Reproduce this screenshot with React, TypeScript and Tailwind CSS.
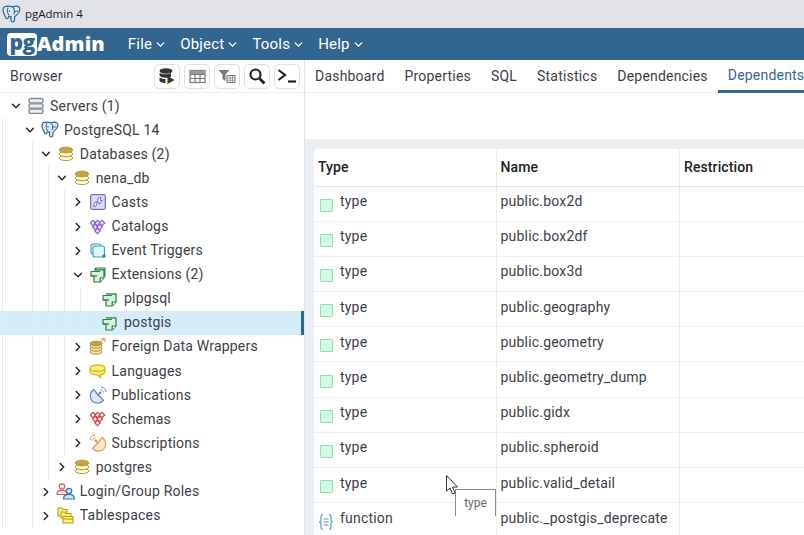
import { ChevronDown, ChevronRight } from "lucide-react";
import type { ReactNode } from "react";

const font = { fontFamily: "Roboto, sans-serif" };

const Elephant = ({ size = 18 }: { size?: number }) => (
  <svg width={size} height={size} viewBox="0 0 20 20" fill="none" stroke="#336791" strokeWidth="1.300" strokeLinejoin="round" className="shrink-0">
    <path d="M4 1.500C1.500 1.500.8 4 1.200 6.500 1.600 9 3 11 3.800 13c.5 1.500 1.700 2 2.700.5L7 12c1 .5 2 .5 2.500 0V16c.2 2 3 2.500 3.500.5l.3-4c1.700-1.500 5.200-4.500 5.500-7.500.2-2.500-1.800-4-4.300-3.800-1.500.1-2.500.6-3.500.8C9 1.200 6 1 4 1.500z" fill="#dceaf4" />
    <path d="M6.500 2.500C5 5 5.500 8 7.300 11M11 2c1.800 1.500 2.500 5 1.500 8M13 6.500c1.500.5 3 .3 4-.5" strokeWidth="1.100" />
    <circle cx="7.800" cy="6.300" r=".8" fill="#336791" stroke="none" />
  </svg>
);

const Servers = () => (
  <svg width="18" height="18" viewBox="0 0 18 18" fill="#eceef2" stroke="#858a94" strokeWidth="1.300">
    <rect x="2" y="1.500" width="14" height="4.300" rx="1.300" />
    <rect x="2" y="6.800" width="14" height="4.300" rx="1.300" />
    <rect x="2" y="12.100" width="14" height="4.300" rx="1.300" />
  </svg>
);

const Db = () => (
  <svg width="16" height="16" viewBox="0 0 16 16" stroke="#b39a3a" strokeWidth="1">
    <ellipse cx="8" cy="12" rx="6.800" ry="2.600" fill="#fff8d0" />
    <ellipse cx="8" cy="8" rx="6.800" ry="2.600" fill="#fff8d0" />
    <ellipse cx="8" cy="4" rx="6.800" ry="2.800" fill="#c2a63e" />
  </svg>
);

const Casts = () => (
  <svg width="16" height="16" viewBox="0 0 16 16" fill="none">
    <rect x=".7" y=".7" width="14.600" height="14.600" rx="1.500" fill="#dcdcf8" stroke="#6f6fc8" strokeWidth="1.200" />
    <path d="M11 3.500H8.500L7 8h2.500l-.5 2.500 3.500-4H10l1-3zM3.500 12.500l1.500-4.500h2l-1 4.500z" fill="#fff" stroke="#6f6fc8" strokeWidth=".9" />
  </svg>
);

const Diamonds = ({ c, fill }: { c: string; fill: string }) => (
  <svg width="17" height="16" viewBox="0 0 17 16" fill={fill} stroke={c} strokeWidth="1.100">
    {[[4, 4], [8.500, 4], [13, 4], [6.200, 8], [10.700, 8], [8.500, 12]].map(([x, y]) => (
      <path key={`${x}-${y}`} d={`M${x} ${y - 2.800}L${x + 2.800} ${y}L${x} ${y + 2.800}L${x - 2.800} ${y}z`} />
    ))}
  </svg>
);

const EventTrigger = () => (
  <svg width="16" height="16" viewBox="0 0 16 16" fill="#e0f6fa" stroke="#37a3b8" strokeWidth="1.100">
    <rect x="1" y="1" width="10" height="10" rx="2" />
    <rect x="3" y="3" width="11.500" height="11" rx="2" />
    <path d="M12.500 11.500h3v3h-3z" fill="#1f8ea3" stroke="none" />
  </svg>
);

// page with a tab on the left and a folded lower corner
const Extension = ({ stacked }: { stacked?: boolean }) => (
  <svg width="16" height="16" viewBox="0 0 16 16" fill="#d7f0d9" stroke="#2e7d46" strokeWidth="1.200" strokeLinejoin="round">
    {stacked && <path d="M5.500 3V1H15v8h-1" />}
    <path d="M4 2.800h10v8.200l-3.800 4H4V9H1V4.500h9" />
    <path d="M14 11h-3.800v4" fill="#fff" />
    <path d="M1 9h6" fill="none" />
  </svg>
);

const Fdw = () => (
  <svg width="17" height="17" viewBox="0 0 17 17" fill="#f3e6a0" stroke="#a88f34" strokeWidth="1">
    <ellipse cx="7" cy="14" rx="6" ry="2.200" />
    <ellipse cx="7" cy="11" rx="6" ry="2.200" />
    <ellipse cx="7" cy="8" rx="6" ry="2.200" />
    <ellipse cx="7" cy="5.500" rx="6" ry="2.200" fill="#c2a63e" />
    <path d="M11 4l4-3M12.500 .8H16v3" fill="none" stroke="#c98a2e" />
  </svg>
);

const Languages = () => (
  <svg width="17" height="15" viewBox="0 0 17 15" fill="#fdf27a" stroke="#d9b81f" strokeWidth="1.300" strokeLinejoin="round">
    <path d="M1 4.500C1 2.500 4 1 8.500 1S16 2.500 16 4.500v3c0 2-2.500 3-5 3.200L12 14 8 10.800C4 10.800 1 9.500 1 7.500z" />
    <path d="M1 4.500c1 2 4 3 7.500 3S15 6.500 16 4.500" fill="none" />
  </svg>
);

// bowl sits lower-left, signal arcs go to the upper right; flip mirrors it
const Dish = ({ c, fill, spark, flip }: { c: string; fill: string; spark: string; flip?: boolean }) => (
  <svg width="18" height="18" viewBox="0 0 18 18" fill={fill} stroke={c} strokeWidth="1.200" strokeLinejoin="round">
    <g transform={flip ? "translate(18 0) scale(-1 1)" : undefined}>
      <path d="M4.500 3.500C.5 7 .5 12 3 14.800s8 3.500 11.500 -.3z" />
      <path d="M8.500 9.500L11 7" fill="none" />
      <circle cx="11.300" cy="6.700" r="1.200" fill={spark} stroke="none" />
      <path d="M11.500 3.500c1.500.2 2.800 1.500 3 3M12 1c2.800.2 4.800 2.200 5 5" fill="none" stroke={spark} strokeWidth="1" />
    </g>
  </svg>
);

const Roles = () => (
  <svg width="20" height="17" viewBox="0 0 20 17" strokeWidth="1.200">
    <g fill="#fde8e8" stroke="#cf5a5f">
      <circle cx="6" cy="3.500" r="2.700" />
      <path d="M1 11.500C1 8.500 3 7.200 6 7.200s4 .8 5 2.300v2H1z" />
    </g>
    <g fill="#cfe3f7" stroke="#3678b8">
      <circle cx="13" cy="8" r="2.700" />
      <path d="M7.500 16c0-3 2-4.600 5.500-4.600s5.500 1.600 5.500 4.600z" />
    </g>
  </svg>
);

const Tablespaces = () => (
  <svg width="17" height="17" viewBox="0 0 17 17" fill="#fdf27a" stroke="#b89b17" strokeWidth="1.100" strokeLinejoin="round">
    <path d="M1 1h4l1 1.500h4V9H1z" />
    <path d="M4 5h4l1 1.500h5V11H4z" />
    <rect x="6" y="9.500" width="10" height="6.500" />
    <path d="M6 12h10" />
  </svg>
);

const TypeIcon = () => (
  <span className="block h-[13px] w-[13px] shrink-0 rounded-[1px] border border-[#8fe0b4] bg-[#d3f9e3]" />
);

const FnIcon = () => (
  <svg width="16" height="18" viewBox="0 0 16 18" fill="none" stroke="#3d9fb5" strokeWidth="1.100" className="shrink-0">
    <path d="M5 1.500C3 1.500 3 2.500 3 4v3.500C3 8.500 2 9 1 9c1 0 2 .5 2 1.500V14c0 1.500 0 2.500 2 2.500M11 1.500c2 0 2 1 2 2.500v3.500c0 1 1 1.500 2 1.500-1 0-2 .5-2 1.500V14c0 1.500 0 2.500-2 2.500" />
    <path d="M5.500 6h5M5.500 9h5M5.500 12h5" stroke="#6b8ea0" />
  </svg>
);

type Node = { label: string; icon: ReactNode; open?: boolean; leaf?: boolean; selected?: boolean; children?: Node[] };

const tree: Node = {
  label: "Servers (1)",
  icon: <Servers />,
  open: true,
  children: [
    {
      label: "PostgreSQL 14",
      icon: <Elephant />,
      open: true,
      children: [
        {
          label: "Databases (2)",
          icon: <Db />,
          open: true,
          children: [
            {
              label: "nena_db",
              icon: <Db />,
              open: true,
              children: [
                { label: "Casts", icon: <Casts /> },
                { label: "Catalogs", icon: <Diamonds c="#8a5fc7" fill="#e4d6f7" /> },
                { label: "Event Triggers", icon: <EventTrigger /> },
                {
                  label: "Extensions (2)",
                  icon: <Extension stacked />,
                  open: true,
                  children: [
                    { label: "plpgsql", icon: <Extension />, leaf: true },
                    { label: "postgis", icon: <Extension />, leaf: true, selected: true },
                  ],
                },
                { label: "Foreign Data Wrappers", icon: <Fdw /> },
                { label: "Languages", icon: <Languages /> },
                { label: "Publications", icon: <Dish c="#6a7fc4" fill="#dfe6fa" spark="#6a7fc4" /> },
                { label: "Schemas", icon: <Diamonds c="#c9444f" fill="#fbdcdc" /> },
                { label: "Subscriptions", icon: <Dish c="#e39a4b" fill="#fde7cd" spark="#e08a2e" flip /> },
              ],
            },
            { label: "postgres", icon: <Db /> },
          ],
        },
        { label: "Login/Group Roles", icon: <Roles /> },
        { label: "Tablespaces", icon: <Tablespaces /> },
      ],
    },
  ],
};

// each level goes in by about 16px, the first one sits 2px further right
const TreeNode = ({ node, depth }: { node: Node; depth: number }) => (
  <div className="relative">
    <div
      className={`flex h-[24.1px] items-center ${node.selected ? "border-r-[3px] border-[#326690] bg-[#d5ecfa]" : ""}`}
      style={{ paddingLeft: (depth === 0 ? 9 : 7) + depth * 15.9 }}
    >
      <span className="flex w-[14px] shrink-0 justify-center text-[#222]">
        {node.leaf ? null : node.open ? (
          <ChevronDown size={14} strokeWidth={2.4} />
        ) : (
          <ChevronRight size={14} strokeWidth={2.4} />
        )}
      </span>
      <span className={`flex w-[20px] shrink-0 justify-center ${node.leaf ? "-ml-[0.5px]" : "ml-[3px]"}`}>{node.icon}</span>
      <span className="ml-[4px] whitespace-nowrap text-[14px] tracking-[0.2px] text-[#3c4149]">{node.label}</span>
    </div>
    {node.children && (
      <div className="relative">
        <span
          className="absolute bottom-0 top-0 z-10 w-px bg-[#e4e8f0]"
          style={{ left: depth === 0 ? 2 : 16.500 + depth * 15.9 }}
        />
        {node.children.map((c) => (
          <TreeNode key={c.label} node={c} depth={depth + 1} />
        ))}
      </div>
    )}
  </div>
);

const ToolButton = ({ children }: { children: ReactNode }) => (
  <button className="flex h-[25px] w-[26px] items-center justify-center rounded-[5px] border border-[#dde0e6] bg-white">
    {children}
  </button>
);

const rows: [string, string][] = [
  ["type", "public.box2d"],
  ["type", "public.box2df"],
  ["type", "public.box3d"],
  ["type", "public.geography"],
  ["type", "public.geometry"],
  ["type", "public.geometry_dump"],
  ["type", "public.gidx"],
  ["type", "public.spheroid"],
  ["type", "public.valid_detail"],
  ["function", "public._postgis_deprecate"],
];

const menus = ["File", "Object", "Tools", "Help"];
const tabs = ["Dashboard", "Properties", "SQL", "Statistics", "Dependencies", "Dependents"];

export default function App() {
  return (
    <div className="relative flex h-[535px] w-[804px] flex-col overflow-hidden bg-white" style={font}>
      {/* window title */}
      <div className="flex h-[28px] shrink-0 items-center bg-[#e1e3e6] pl-[2px]">
        <Elephant size={19} />
        <span className="ml-[4px] text-[11.500px] text-[#1b1b1b]" style={{ fontFamily: "'Open Sans', sans-serif" }}>
          pgAdmin 4
        </span>
      </div>

      {/* navbar */}
      <div className="flex h-[32px] shrink-0 items-center bg-[#326690] pl-[7px]">
        <div className="flex items-center" style={{ fontFamily: "'Open Sans', sans-serif" }}>
          <span className="flex h-[23px] w-[30px] items-center justify-center rounded-[4px] bg-white pb-[3px] text-[21px] font-extrabold leading-none tracking-[-0.5px] text-[#326690]">
            pg
          </span>
          <span className="text-[20px] font-extrabold leading-none tracking-[0.1px] text-white">Admin</span>
        </div>
        <div className="ml-[23px] flex gap-[13px]">
          {menus.map((m) => (
            <span key={m} className="flex items-center text-[15px] tracking-[0.2px] text-white">
              {m}
              <ChevronDown size={13} strokeWidth={2.4} className="ml-[2px]" />
            </span>
          ))}
        </div>
      </div>

      <div className="flex min-h-0 flex-1">
        {/* browser */}
        <div className="flex w-[305px] shrink-0 flex-col border-r border-[#dfe3ea]">
          <div className="flex h-[33px] shrink-0 items-center justify-between border-b border-[#eef0f4] pl-[10px] pr-[4px]">
            <span className="text-[14px] tracking-[0.2px] text-[#3c4149]">Browser</span>
            <div className="flex gap-[4px]">
              <ToolButton>
                <svg width="18" height="18" viewBox="0 0 18 18">
                  <ellipse cx="8" cy="4" rx="6.500" ry="2.700" fill="#333" />
                  <path d="M1.500 6v2c0 1.500 3 2.700 6.500 2.700 2 0 3.500-.3 5-1V6c-1.500 1-3 1.300-5 1.300S3 7 1.500 6zM1.500 10.500v3c0 1.300 2.500 2.500 6 2.500V12c-3 0-5-.6-6-1.500z" fill="#333" />
                  <path d="M9.500 9l7 4-7 4z" fill="#333" />
                  <path d="M9.500 11v6" stroke="#d98a1f" strokeWidth="1.200" />
                </svg>
              </ToolButton>
              <ToolButton>
                <svg width="17" height="15" viewBox="0 0 17 15" fill="none" stroke="#777" strokeWidth="1.200">
                  <rect x="1" y="1.500" width="15" height="12" />
                  <path d="M1 5.500h15M1 9.500h15M6 1.500v12M11 1.500v12" />
                  <rect x="1" y="1.500" width="15" height="3.500" fill="#999" stroke="none" />
                </svg>
              </ToolButton>
              <ToolButton>
                <svg width="18" height="15" viewBox="0 0 18 15" fill="none">
                  <path d="M.5 1h11L7.500 5.500V12L4.500 10V5.500z" fill="#777" />
                  <rect x="9" y="6.500" width="8" height="7" stroke="#777" />
                  <path d="M9 9h8M9 11.300h8M12 6.500v7M14.500 6.500v7" stroke="#777" strokeWidth=".7" />
                </svg>
              </ToolButton>
              <ToolButton>
                <svg width="18" height="18" viewBox="0 0 18 18" fill="none" stroke="#222" strokeWidth="2.200">
                  <circle cx="7.500" cy="7.500" r="5" />
                  <path d="M11.500 11.500l5 5" strokeWidth="2.800" />
                </svg>
              </ToolButton>
              <ToolButton>
                <svg width="20" height="16" viewBox="0 0 20 16" fill="none" stroke="#222" strokeWidth="2.200">
                  <path d="M1.500 2l6.500 5-6.500 5" />
                  <path d="M11 13.500h8" />
                </svg>
              </ToolButton>
            </div>
          </div>
          <div className="min-h-0 flex-1 overflow-hidden pt-[1px]">
            <TreeNode node={tree} depth={0} />
          </div>
        </div>

        {/* properties */}
        <div className="flex min-w-0 flex-1 flex-col">
          <div className="flex h-[33px] shrink-0 items-stretch gap-[20px] border-b border-[#eef0f4] pl-[10px]">
            {tabs.map((t) => {
              const active = t === "Dependents";
              return (
                <span
                  key={t}
                  className={`flex items-center whitespace-nowrap text-[14px] tracking-[0.2px] ${
                    active ? "-mb-px -ml-[10px] border-b-[3px] border-[#326690] pl-[10px] pt-[1px] text-[#326690]" : "text-[#3c4149]"
                  }`}
                >
                  {t}
                </span>
              );
            })}
          </div>
          <div className="h-[46px] shrink-0" />
          <div className="min-h-0 flex-1 overflow-hidden bg-[#ebeef3] pl-[9px] pt-[10px]">
            <div className="w-[600px] rounded-tl-[4px] bg-white">
              <div className="grid h-[37.500px] grid-cols-[182.500px_183.500px_1fr] border-b border-[#e1e4ea]">
                {["Type", "Name", "Restriction"].map((h) => (
                  <div key={h} className="flex items-center border-r border-[#eceef2] pl-[4px] text-[14px] font-medium tracking-[0.1px] text-[#222]">
                    {h}
                  </div>
                ))}
              </div>
              {rows.map(([type, name]) => (
                <div key={name} className="grid h-[35.200px] grid-cols-[182.500px_183.500px_1fr] border-b border-[#eceef2] text-[14px] tracking-[0.2px] text-[#3c4149]">
                  <div className="flex items-center border-r border-[#eceef2] pl-[5px]">
                    <span className="flex w-[14px] justify-center pt-[3px]">{type === "type" ? <TypeIcon /> : <FnIcon />}</span>
                    <span className="ml-[7px] pb-[4px]">{type}</span>
                  </div>
                  <div className="flex items-center border-r border-[#eceef2] pb-[4px] pl-[4px]">{name}</div>
                  <div />
                </div>
              ))}
            </div>
          </div>
        </div>
      </div>

      {/* tooltip and pointer lying over the table */}
      <div className="absolute left-[455px] top-[489px] flex h-[27px] w-[41px] items-center justify-center border-x border-t border-[#8a8a8a] bg-white text-[12px] text-[#6a6a6a]">
        type
      </div>
      <svg className="absolute left-[446px] top-[475px]" width="13" height="20" viewBox="0 0 13 20">
        <path d="M.5.500v15.500l3.500-3 2.500 6 2.500-1-2.500-6h5z" fill="#fff" stroke="#333" strokeWidth="1" />
      </svg>
    </div>
  );
}
